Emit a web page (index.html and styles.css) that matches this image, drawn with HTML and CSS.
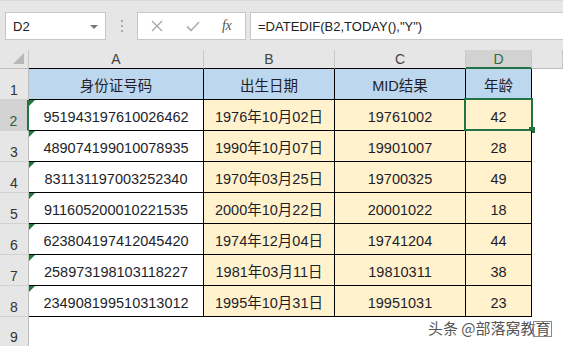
FILE: index.html
```html
<!DOCTYPE html>
<html lang="zh">
<head>
<meta charset="utf-8">
<title>Sheet</title>
<link rel="stylesheet" href="styles.css">
</head>
<body>
<div class="app">
  <div class="toolbar">
    <div class="namebox"><span>D2</span><span class="caret"></span></div>
    <div class="grip"><i></i><i></i><i></i></div>
    <div class="fxbox">
      <svg class="ico-x" width="12" height="12" viewBox="0 0 12 12"><path d="M1 1 L11 11 M11 1 L1 11" stroke="#a8a8a8" stroke-width="1.4" fill="none"/></svg>
      <svg class="ico-ok" width="14" height="11" viewBox="0 0 14 11"><path d="M1 5.5 L5 9.5 L13 1" stroke="#b4b4b4" stroke-width="1.8" fill="none"/></svg>
      <span class="fx">fx</span>
    </div>
    <div class="formula">=DATEDIF(B2,TODAY(),"Y")</div>
  </div>
  <div class="sheet">
    <div class="corner"><span class="tri"></span></div>
    <div class="ch tb">A</div>
    <div class="ch tb">B</div>
    <div class="ch tb">C</div>
    <div class="ch tb cur">D</div>
    <div class="ch"></div>

    <div class="rh">1</div>
    <div class="c hd">身份证号码</div>
    <div class="c hd">出生日期</div>
    <div class="c hd">MID结果</div>
    <div class="c hd">年龄</div>
    <div class="e"></div>

    <div class="rh cur">2</div>
    <div class="c id">951943197610026462</div>
    <div class="c y">1976年10月02日</div>
    <div class="c y">19761002</div>
    <div class="c y active">42<span class="sel"><span class="handle"></span></span></div>
    <div class="e"></div>

    <div class="rh">3</div>
    <div class="c id">489074199010078935</div>
    <div class="c y">1990年10月07日</div>
    <div class="c y">19901007</div>
    <div class="c y">28</div>
    <div class="e"></div>

    <div class="rh">4</div>
    <div class="c id">831131197003252340</div>
    <div class="c y">1970年03月25日</div>
    <div class="c y">19700325</div>
    <div class="c y">49</div>
    <div class="e"></div>

    <div class="rh">5</div>
    <div class="c id">911605200010221535</div>
    <div class="c y">2000年10月22日</div>
    <div class="c y">20001022</div>
    <div class="c y">18</div>
    <div class="e"></div>

    <div class="rh">6</div>
    <div class="c id">623804197412045420</div>
    <div class="c y">1974年12月04日</div>
    <div class="c y">19741204</div>
    <div class="c y">44</div>
    <div class="e"></div>

    <div class="rh">7</div>
    <div class="c id">258973198103118227</div>
    <div class="c y">1981年03月11日</div>
    <div class="c y">19810311</div>
    <div class="c y">38</div>
    <div class="e"></div>

    <div class="rh">8</div>
    <div class="c id">234908199510313012</div>
    <div class="c y">1995年10月31日</div>
    <div class="c y">19951031</div>
    <div class="c y">23</div>
    <div class="e"></div>

    <div class="rh last">9</div>
    <div class="e span"></div>
  </div>
  <div class="watermark">头条 @部落窝教育<span class="wm-box"></span></div>
</div>
</body>
</html>
```

FILE: styles.css
```css
* { box-sizing: border-box; }
html, body { margin: 0; padding: 0; }
body {
  width: 563px;
  height: 346px;
  overflow: hidden;
  background: #ffffff;
  font-family: "Liberation Sans", "Noto Sans CJK SC", sans-serif;
  color: #222;
}
.app { position: relative; width: 563px; height: 346px; overflow: hidden; }

.toolbar {
  height: 50px;
  background: #e6e6e6;
  border-top: 1px solid #dadada;
  display: flex;
  align-items: flex-start;
  padding: 11px 0 0 5px;
}
.namebox {
  width: 101px;
  height: 28px;
  background: #fff;
  border: 1px solid #c6c6c6;
  display: flex;
  align-items: center;
  justify-content: space-between;
  padding: 0 7px 0 7px;
  font-size: 13px;
  color: #222;
}
.caret {
  width: 0; height: 0;
  border-left: 4px solid transparent;
  border-right: 4px solid transparent;
  border-top: 4px solid #777;
  margin-top: 1px;
}
.grip {
  width: 31px;
  height: 28px;
  display: flex;
  flex-direction: column;
  align-items: center;
  justify-content: center;
  gap: 3px;
}
.grip i { display: block; width: 2px; height: 2px; background: #a9a9a9; }
.fxbox {
  width: 109px;
  height: 28px;
  background: #fff;
  border: 1px solid #c6c6c6;
  display: flex;
  align-items: center;
  padding-left: 13px;
}
.ico-x { margin-right: 23px; }
.ico-ok { margin-right: 22px; }
.fx {
  font-family: "Liberation Serif", serif;
  font-style: italic;
  font-size: 14px;
  color: #555;
  letter-spacing: -0.5px;
}
.formula {
  flex: 1;
  height: 28px;
  margin-left: 4px;
  background: #fff;
  border: 1px solid #c6c6c6;
  border-right: none;
  display: flex;
  align-items: center;
  padding-left: 7px;
  font-size: 13px;
  color: #222;
}

.sheet {
  display: grid;
  grid-template-columns: 29px 175px 131px 131px 66px 1fr;
  grid-template-rows: 19px repeat(8, 31px) 1fr;
  height: 296px;
}
.corner {
  background: #e6e6e6;
  border-right: 1px solid #c6c6c6;
  border-bottom: 1px solid #bdbdbd;
  position: relative;
}
.tri {
  position: absolute;
  right: 4px;
  bottom: 4px;
  width: 0; height: 0;
  border-left: 11px solid transparent;
  border-bottom: 11px solid #b8b8b8;
}
.ch {
  background: #e6e6e6;
  border-right: 1px solid #c8c8c8;
  border-bottom: 1px solid #bdbdbd;
  display: flex;
  align-items: flex-end;
  justify-content: center;
  font-size: 14px;
  line-height: 16px;
  color: #444;
  padding-bottom: 1px;
}
.ch.tb { border-bottom-color: #000; }
.ch.cur {
  background: #d2d2d2;
  color: #2f6b45;
  border-bottom: 2px solid #217346;
  padding-bottom: 0;
}
.rh {
  background: #e6e6e6;
  border-right: 1px solid #bdbdbd;
  border-bottom: 1px solid #d2d2d2;
  display: flex;
  align-items: flex-end;
  justify-content: center;
  font-size: 14px;
  line-height: 16px;
  color: #333;
  padding-bottom: 1px;
}
.rh.cur {
  background: #d2d2d2;
  color: #2f5e42;
  border-right: 2px solid #217346;
}
.rh.last { border-bottom: none; }
.c {
  border-right: 1px solid #000;
  border-bottom: 1px solid #000;
  display: flex;
  align-items: center;
  justify-content: center;
  font-size: 14.5px;
  line-height: 18px;
  padding-top: 3px;
  color: #1e1e2a;
  position: relative;
  white-space: nowrap;
}
.c.hd { background: #bdd7ee; }
.c.y { background: #fff2cc; }
.c.id { background: #fff; }
.c.id::before {
  content: "";
  position: absolute;
  left: 0;
  top: 0;
  width: 0; height: 0;
  border-top: 6px solid #1f7a3c;
  border-right: 6px solid transparent;
}
.e { background: #fff; }
.e.span { grid-column: 2 / 7; }

.sel {
  position: absolute;
  left: -2px;
  top: -2px;
  width: 69px;
  height: 33px;
  border: 2px solid #217346;
}
.handle {
  position: absolute;
  right: -4px;
  bottom: -4px;
  width: 6px;
  height: 6px;
  background: #217346;
}

.watermark {
  position: absolute;
  left: 428px;
  top: 319px;
  font-family: "Noto Sans CJK SC", sans-serif;
  font-size: 15px;
  line-height: 18px;
  color: #555;
  text-shadow: 0 0 2px #fff, 0 0 2px #fff;
  white-space: nowrap;
}
.wm-box {
  position: absolute;
  left: 105px;
  top: 2px;
  width: 19px;
  height: 16px;
  border: 1px solid #8a8a8a;
}
```
